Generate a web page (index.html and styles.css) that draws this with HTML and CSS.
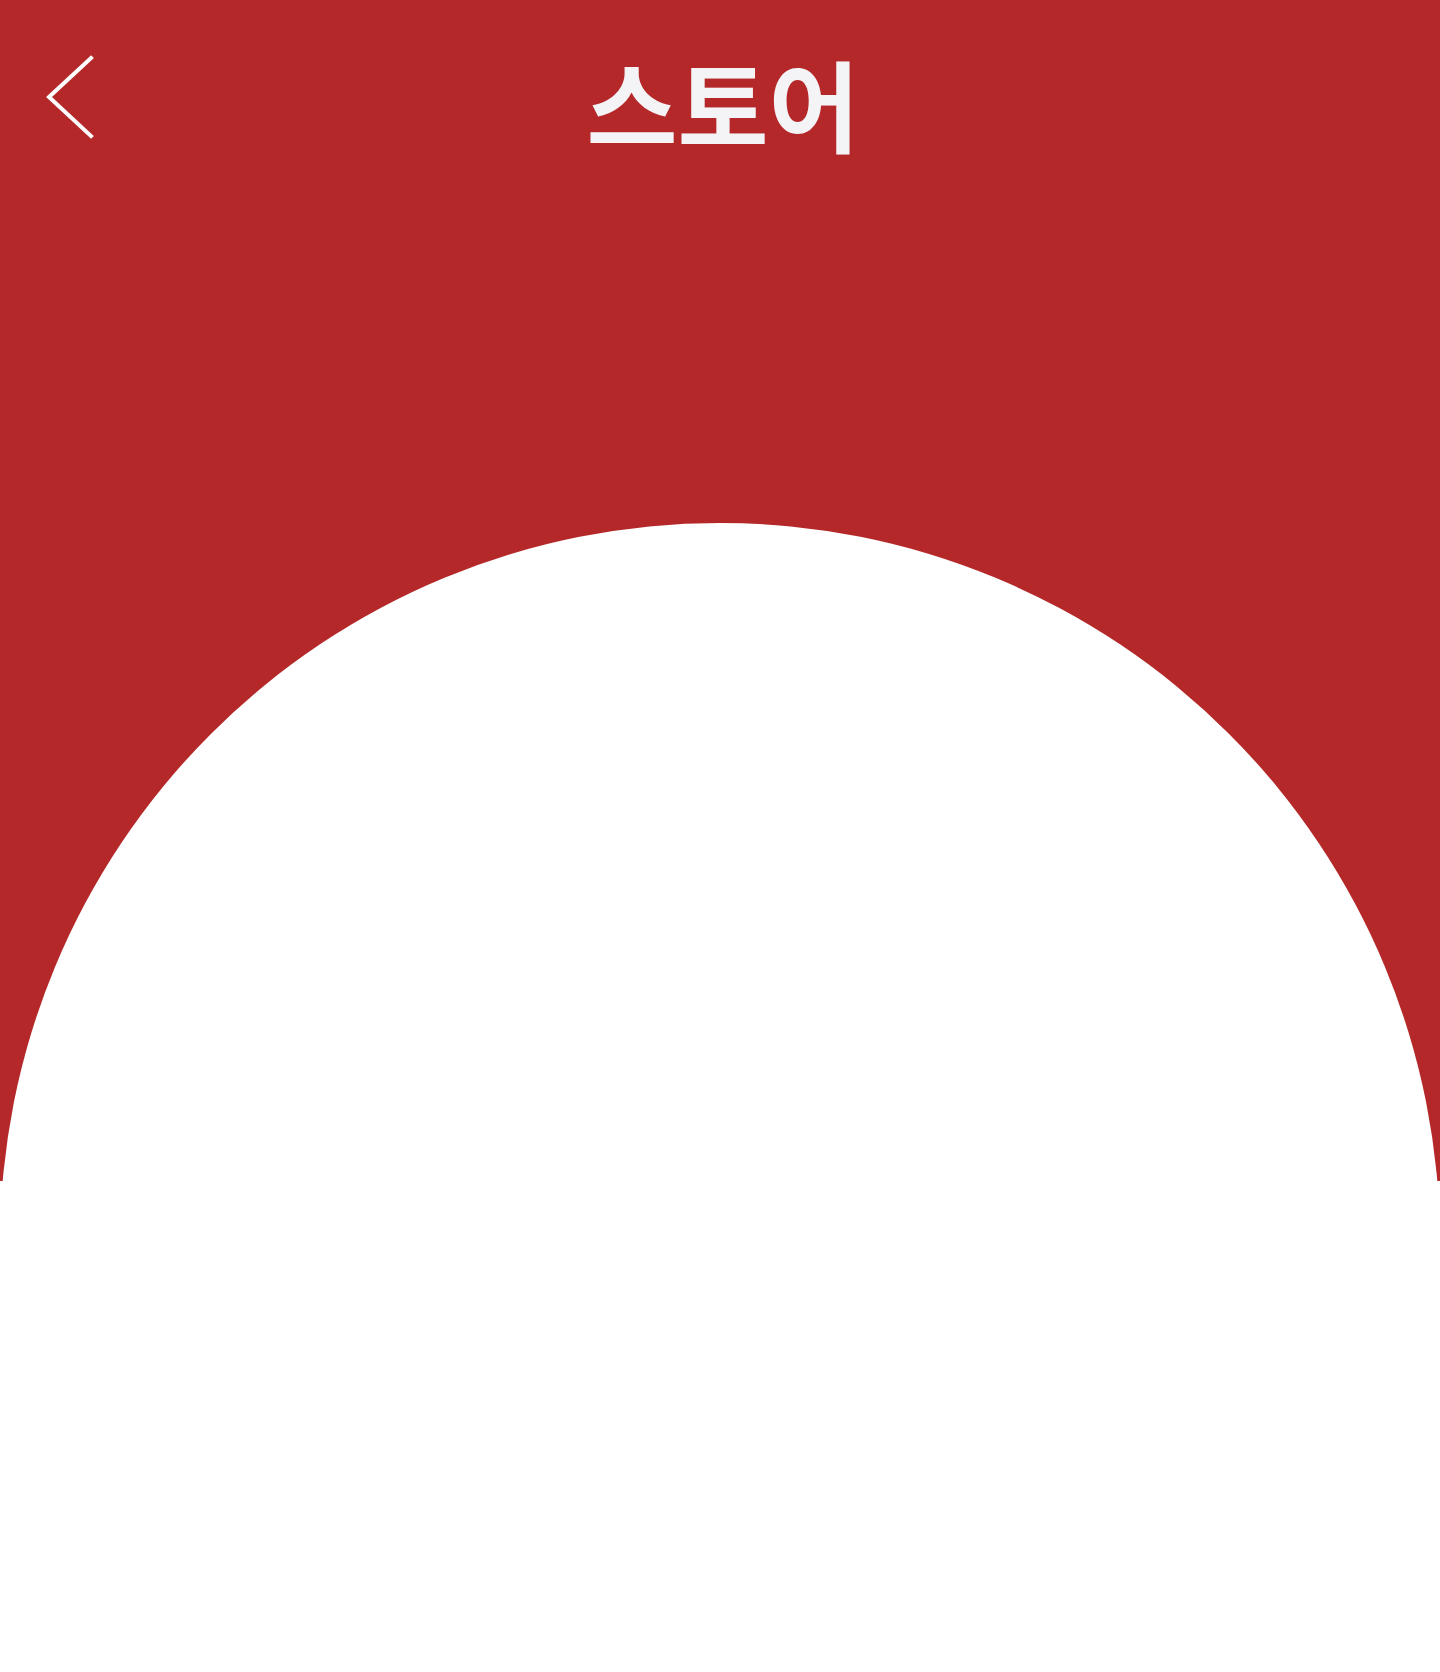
FILE: index.html
```html
<!DOCTYPE html>
<html lang="ko">
<head>
<meta charset="utf-8">
<title>스토어</title>
<link rel="stylesheet" href="styles.css">
</head>
<body>
<div class="page">
  <section class="hero">
    <header class="topbar">
      <button class="back" aria-label="뒤로">
        <svg width="60" height="100" viewBox="0 0 60 100"><path d="M45 8 L3 47 L45 86" fill="none" stroke="#fff" stroke-width="4" stroke-linecap="square"/></svg>
      </button>
      <h1 class="title">스토어</h1>
    </header>
    <div class="disc"></div>
  </section>
  <main class="content"></main>
</div>
</body>
</html>
```
FILE: styles.css
```css
html, body {
  margin: 0;
  padding: 0;
  background: #ffffff;
}
.page {
  width: 1440px;
  min-height: 1672px;
  font-family: "Noto Sans CJK KR", "Noto Sans", sans-serif;
}
.hero {
  position: relative;
  height: 1181px;
  background: #b42829;
  overflow: hidden;
}
.topbar {
  position: relative;
  height: 212px;
  display: flex;
  align-items: flex-start;
  justify-content: center;
}
.back {
  position: absolute;
  left: 46px;
  top: 50px;
  width: 60px;
  height: 100px;
  padding: 0;
  border: 0;
  background: none;
}
.back svg { display: block; }
.title {
  margin: 0;
  margin-top: 32px;
  padding-left: 6px;
  color: #f4f4f6;
  font-size: 99px;
  font-weight: 700;
  line-height: 140px;
  letter-spacing: 0;
}
.disc {
  position: absolute;
  left: 0;
  top: 523px;
  width: 1440px;
  height: 1440px;
  border-radius: 50%;
  background: #ffffff;
}
.content {
  height: 491px;
  background: #ffffff;
}
```
